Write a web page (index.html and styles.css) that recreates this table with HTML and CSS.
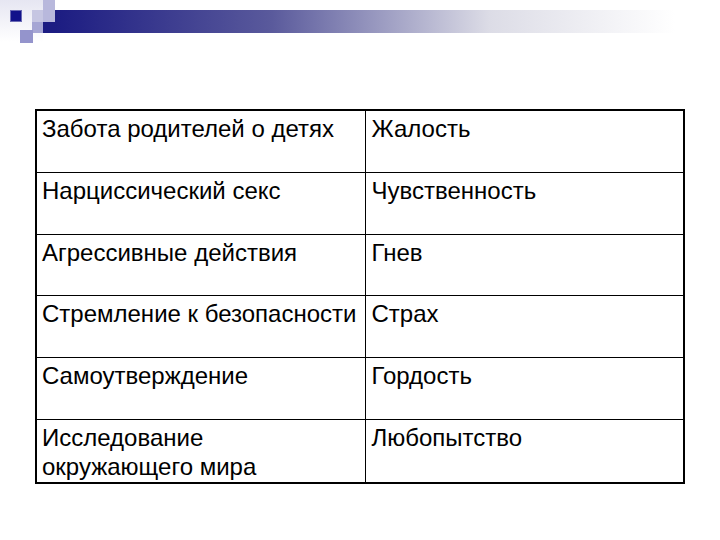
FILE: index.html
```
<!DOCTYPE html>
<html>
<head>
<meta charset="utf-8">
<link rel="stylesheet" href="styles.css">
</head>
<body>
<div class="page">
  <svg class="deco" width="720" height="46" viewBox="0 0 720 46">
    <defs>
      <linearGradient id="bar" x1="0" x2="1" y1="0" y2="0">
        <stop offset="0" stop-color="#1c1c82"/>
        <stop offset="0.35" stop-color="#5a5a9c"/>
        <stop offset="0.7" stop-color="#dcdce6"/>
        <stop offset="1" stop-color="#ffffff"/>
      </linearGradient>
      <linearGradient id="fade" x1="0" x2="0" y1="0" y2="1">
        <stop offset="0" stop-color="#e6e6f2"/>
        <stop offset="1" stop-color="#ffffff"/>
      </linearGradient>
    </defs>
    <rect x="0" y="0" width="43" height="42" fill="url(#fade)"/>
    <rect x="55" y="10" width="620" height="23" fill="url(#bar)"/>
    <rect x="32" y="10" width="11" height="12" fill="#c6c6e2"/>
    <rect x="43" y="0" width="12" height="22" fill="#b8b8dc"/>
    <rect x="43" y="22" width="12" height="11" fill="#1c1c82"/>
    <rect x="32" y="22" width="11" height="11" fill="#a6a6d4"/>
    <rect x="20" y="30" width="13" height="13" fill="#9494cc"/>
    <rect x="10.5" y="10.5" width="11" height="11" fill="#12128a" stroke="#6a6ab4" stroke-width="1"/>
  </svg>
  <table class="grid">
    <tr><td class="c1">Забота родителей о детях</td><td class="c2">Жалость</td></tr>
    <tr><td class="c1">Нарциссический секс</td><td class="c2">Чувственность</td></tr>
    <tr class="short"><td class="c1">Агрессивные действия</td><td class="c2">Гнев</td></tr>
    <tr><td class="c1">Стремление к безопасности</td><td class="c2">Страх</td></tr>
    <tr><td class="c1">Самоутверждение</td><td class="c2">Гордость</td></tr>
    <tr class="last"><td class="c1">Исследование<br>окружающего мира</td><td class="c2">Любопытство</td></tr>
  </table>
</div>
</body>
</html>
```
FILE: styles.css
```
html, body {
  margin: 0;
  padding: 0;
  background: #ffffff;
}
.page {
  width: 720px;
  height: 540px;
  position: relative;
  overflow: hidden;
  font-family: "Liberation Sans", Arial, sans-serif;
}
.deco {
  display: block;
}
.grid {
  margin: 63px 0 0 35px;
  width: 650px;
  border-collapse: collapse;
  border: 2px solid #000;
  font-size: 24px;
  line-height: 29px;
  color: #000;
}
.grid td {
  border: 1px solid #000;
  vertical-align: top;
  height: 62px;
  box-sizing: border-box;
  padding: 3px 4px 0 6px;
}
.grid tr.short td {
  height: 61px;
}
.grid tr:first-child td {
  border-top: 2px solid #000;
}
.grid tr.last td {
  height: 64px;
  border-bottom: 2px solid #000;
}
.grid td.c1 {
  width: 329px;
  padding-left: 5px;
  border-left: 2px solid #000;
}
.grid td.c2 {
  border-right: 2px solid #000;
}
```
